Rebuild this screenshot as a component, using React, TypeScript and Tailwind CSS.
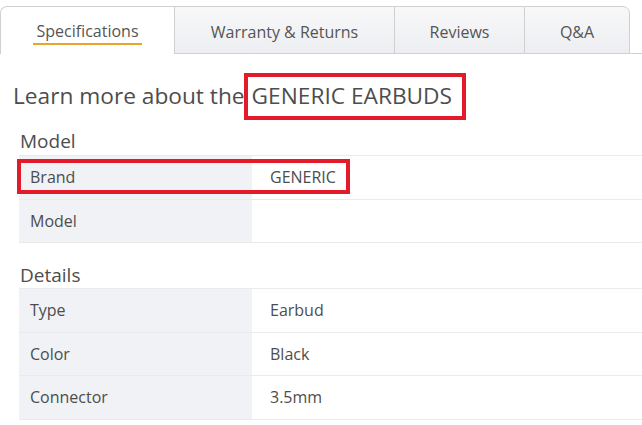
import React from "react";

const tabs = [
  { label: "Specifications", width: "w-[174px]", active: true },
  { label: "Warranty & Returns", width: "w-[220px]" },
  { label: "Reviews", width: "w-[130px]" },
  { label: "Q&A", width: "w-[106px]", last: true },
];

type Row = { label: string; value: string; highlight?: boolean };

const modelRows: Row[] = [
  { label: "Brand", value: "GENERIC", highlight: true },
  { label: "Model", value: "" },
];

const detailRows: Row[] = [
  { label: "Type", value: "Earbud" },
  { label: "Color", value: "Black" },
  { label: "Connector", value: "3.5mm" },
];

function SpecTable({ rows }: { rows: Row[] }) {
  return (
    <div className="ml-[19px] border-t border-[#ebebeb]">
      {rows.map((row) => (
        <div key={row.label} className="relative flex h-[43.5px] border-b border-[#ebebeb] text-[16px]">
          <div className="flex w-[233px] shrink-0 items-center bg-[#f0f2f5] pl-[11px]">{row.label}</div>
          <div className="flex flex-1 items-center pl-[18px]">{row.value}</div>
          {row.highlight && (
            <span className="absolute left-[-2px] top-[3px] h-[35px] w-[333px] border-4 border-[#e21a2a]" />
          )}
        </div>
      ))}
    </div>
  );
}

export default function App() {
  return (
    <main
      className="h-[425px] w-[642px] overflow-hidden bg-white text-[#4d4d4d]"
      style={{ fontFamily: '"Open Sans", "Liberation Sans", sans-serif' }}
    >
      <nav className="flex pt-[6px]">
        {tabs.map((tab) =>
          tab.active ? (
            <div
              key={tab.label}
              className={`${tab.width} flex h-[48px] items-center justify-center rounded-tl-[7px] border-l border-t border-[#d0d0d0] bg-white pt-[3px]`}
            >
              <span className="border-b-2 border-[#eba32a] px-[3px] pb-[1px] text-[16px] leading-[22px] text-[#555]">
                {tab.label}
              </span>
            </div>
          ) : (
            <div
              key={tab.label}
              className={`${tab.width} flex h-[48px] items-center justify-center border-b border-l border-t border-[#d0d0d0] bg-gradient-to-b from-[#f8f8f9] to-[#eceef1] pt-[3px] text-[16px] text-[#555] ${
                tab.last ? "rounded-tr-[7px] border-r" : ""
              }`}
            >
              {tab.label}
            </div>
          )
        )}
        <div className="flex-1 self-end border-b border-[#d0d0d0]" />
      </nav>

      <h1 className="ml-[13px] mt-[19px] flex h-[47px] items-center text-[22.7px] text-[#4d4d4d]">
        Learn more about the
        <span className="ml-[-1px] inline-flex h-[47px] items-center border-4 border-[#e21a2a] pl-[4px] pr-[10px]">
          GENERIC EARBUDS
        </span>
      </h1>

      <h2 className="ml-[20px] mt-[8px] text-[19px] leading-[27px]">Model</h2>
      <SpecTable rows={modelRows} />

      <h2 className="ml-[20px] mt-[19px] text-[19px] leading-[26px]">Details</h2>
      <SpecTable rows={detailRows} />
    </main>
  );
}
